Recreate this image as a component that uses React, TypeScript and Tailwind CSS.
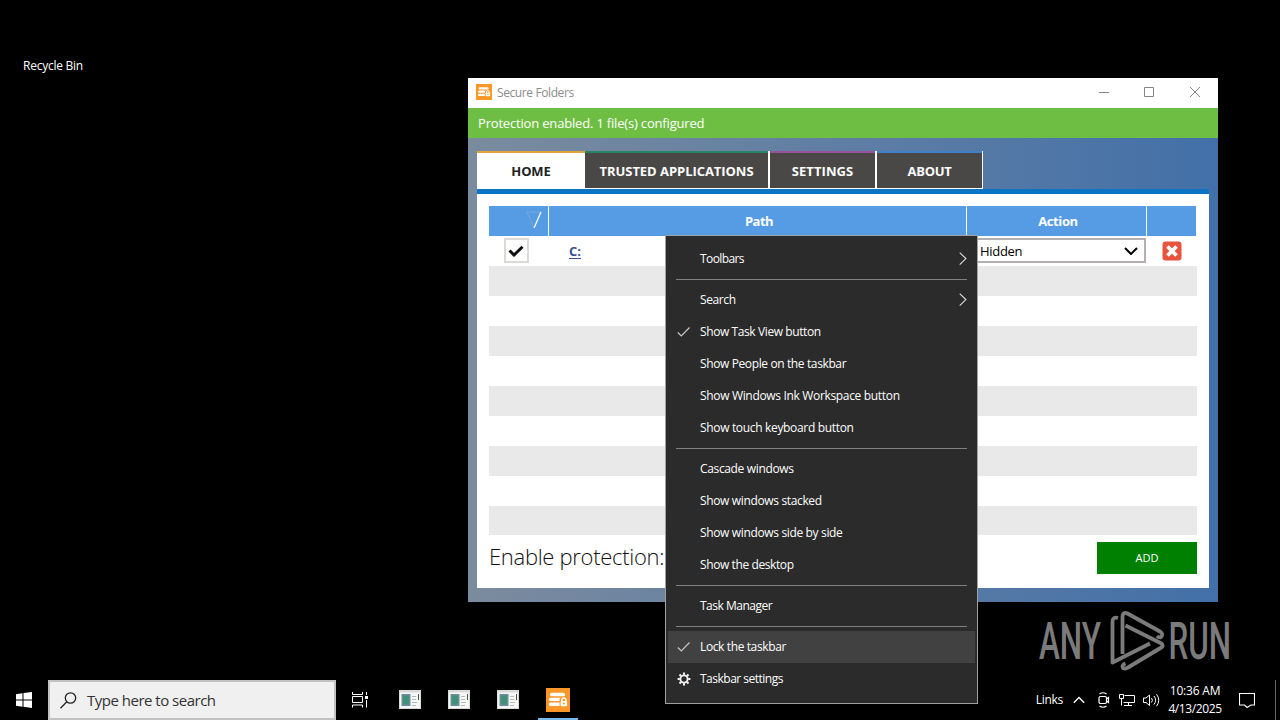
import React, { type FC, type ReactNode } from "react";

type MenuEntry = {
  label: string;
  tracking: string;
  icon?: "check" | "gear";
  submenu?: boolean;
  active?: boolean;
};

const menuGroups: MenuEntry[][] = [
  [{ label: "Toolbars", tracking: "tracking-[-0.6px]", submenu: true }],
  [
    { label: "Search", tracking: "tracking-[-0.4px]", submenu: true },
    { label: "Show Task View button", tracking: "tracking-[-0.4px]", icon: "check" },
    { label: "Show People on the taskbar", tracking: "tracking-[-0.38px]" },
    { label: "Show Windows Ink Workspace button", tracking: "tracking-[-0.33px]" },
    { label: "Show touch keyboard button", tracking: "tracking-[-0.33px]" },
  ],
  [
    { label: "Cascade windows", tracking: "tracking-[-0.35px]" },
    { label: "Show windows stacked", tracking: "tracking-[-0.35px]" },
    { label: "Show windows side by side", tracking: "tracking-[-0.35px]" },
    { label: "Show the desktop", tracking: "tracking-[-0.4px]" },
  ],
  [{ label: "Task Manager", tracking: "tracking-[-0.5px]" }],
  [
    { label: "Lock the taskbar", tracking: "tracking-[-0.38px]", icon: "check", active: true },
    { label: "Taskbar settings", tracking: "tracking-[-0.5px]", icon: "gear" },
  ],
];

const AppLogo: FC<{ className: string }> = ({ className }) => (
  <svg className={className} viewBox="0 0 24 24">
    <rect width="24" height="24" fill="#fb9728" />
    <g fill="#fff">
      <rect x="4" y="4.7" width="15" height="3.6" rx="1.5" />
      <rect x="3" y="9.7" width="16" height="3.4" rx="1.5" />
      <rect x="3" y="14.5" width="14" height="3.6" rx="1.5" />
    </g>
    <rect x="13.6" y="9.2" width="8" height="10" rx="2" fill="#fb9728" />
    <path d="M15.8 13.500v-1.500a2 2 0 0 1 4 0v1.500" fill="none" stroke="#fff" strokeWidth="1.500" />
    <rect x="14.600" y="13" width="6.500" height="5.300" rx="1" fill="#fff" />
    <circle cx="17.800" cy="15.600" r="1" fill="#fb9728" />
  </svg>
);

const CheckIcon = () => (
  <svg className="w-3.5 h-3" viewBox="0 0 14 12">
    <path d="M.8 6.500 4.300 10l8.200-8.500" fill="none" stroke="#c8c8c8" strokeWidth="1.200" />
  </svg>
);

const GearIcon = () => (
  <svg className="w-3.5 h-3.5" viewBox="0 0 14 14">
    <circle cx="7" cy="7" r="3.6" fill="none" stroke="#f2f2f2" strokeWidth="1.9" />
    <g stroke="#f2f2f2" strokeWidth="2.1">
      <path d="M7 .6v2.2M7 11.2v2.2M.6 7h2.2M11.2 7h2.2M2.5 2.5 4 4M10 10l1.5 1.5M2.5 11.5 4 10M10 4l1.5-1.5" />
    </g>
  </svg>
);

const MenuRow: FC<{ entry: MenuEntry }> = ({ entry }) => (
  <div className={`flex h-8 items-center pr-2 ${entry.active ? "bg-[#414141]" : ""}`}>
    <div className="flex w-8 pl-[9px]">
      {entry.icon === "check" && <CheckIcon />}
      {entry.icon === "gear" && <GearIcon />}
    </div>
    <span className={`flex-1 text-[12px] leading-4 font-medium ${entry.tracking}`}>{entry.label}</span>
    {entry.submenu && (
      <svg className="w-2 h-3.5" viewBox="0 0 8 14">
        <path d="m.7 .6 6.200 6-6.200 6" fill="none" stroke="#e0e0e0" strokeWidth="1.100" />
      </svg>
    )}
  </div>
);

const TaskbarMenu = () => (
  <div className="absolute left-[665px] top-[235px] h-[469px] w-[313px] border border-[#a0a0a0] bg-[#2b2b2b] px-0.5 pt-[7px] text-white">
    {menuGroups.map((group, i) => (
      <div key={i}>
        {i > 0 && (
          <div className="h-[9px] px-2 pt-1">
            <div className="h-px bg-[#808080]" />
          </div>
        )}
        {group.map((entry) => (
          <MenuRow key={entry.label} entry={entry} />
        ))}
      </div>
    ))}
  </div>
);

const Tab: FC<{ className: string; children: ReactNode }> = ({ className, children }) => (
  <div className={`flex h-[37px] items-center justify-center border-t-2 pt-0.5 text-[13px] font-bold ${className}`}>
    {children}
  </div>
);

const FolderTable = () => (
  <div className="w-[708px]">
    <div className="flex h-[30px] w-[707px] bg-[#559ce4] text-[13px] font-bold text-white">
      <div className="flex w-[60px] justify-end border-r border-white pt-[5px] pr-[6px]">
        <svg className="w-4 h-[18px]" viewBox="0 0 16 18">
          <path d="M15 1H1l7 16" fill="none" stroke="#7fa5d0" />
          <path d="m15 1-7 16" stroke="#fff" strokeWidth="1.200" />
        </svg>
      </div>
      <div className="flex w-[418px] items-center justify-center border-r border-white pt-0.5 pl-[3px]">
        <span className="tracking-[-0.5px]">Path</span>
      </div>
      <div className="flex w-[180px] items-center justify-center border-r border-white pt-0.5 pl-[3px]">
        <span className="tracking-[-0.4px]">Action</span>
      </div>
    </div>
    <div className="flex h-[30px] items-center">
      <div className="mb-px ml-[15px] flex h-[25px] w-[25px] items-center justify-center border-2 border-[#dcdad6]">
        <svg className="mr-px h-3 w-4" viewBox="0 0 16 12">
          <path d="M1.5 5.5 6 10l8.5-8.3" fill="none" stroke="#111" strokeWidth="3" />
        </svg>
      </div>
      <span className="mt-px ml-[40px] text-[13px] font-bold text-[#3c4f94] underline underline-offset-2">C:</span>
      <div className="mb-px ml-auto flex h-[25px] w-[181px] items-center justify-between border-2 border-[#b4b0b0] pr-1.5 pl-[13px]">
        <span className="pt-0.5 text-[13px] tracking-[-0.300px] text-black">Hidden</span>
        <svg className="w-3.5 h-2" viewBox="0 0 14 8">
          <path d="m1 1 6 6 6-6" fill="none" stroke="#000" strokeWidth="2" />
        </svg>
      </div>
      <svg className="mr-[15px] ml-4 h-5 w-5" viewBox="0 0 20 20">
        <rect x=".5" y=".5" width="19" height="19" rx="3" fill="#e8533d" />
        <path d="m5.5 5.5 9 9m0-9-9 9" stroke="#fff" strokeWidth="3.8" />
      </svg>
    </div>
    {[0, 1, 2, 3, 4, 5, 6, 7].map((n) => (
      <div key={n} className={`h-[30px] ${n % 2 === 0 ? "bg-[#e9e9e9]" : "bg-white"}`} />
    ))}
    <div className="h-[29px] bg-[#e9e9e9]" />
  </div>
);

const SecureFolders = () => (
  <div className="absolute left-[468px] top-[78px] flex h-[524px] w-[750px] flex-col">
    <div className="flex h-[30px] items-center bg-white pr-[17px] pb-0.5 pl-2 text-[#8b8b8b]">
      <AppLogo className="w-4 h-4" />
      <span className="mt-0.5 ml-[5px] text-[12px] tracking-[-0.4px]">Secure Folders</span>
      <svg className="ml-auto w-[102px] h-3" viewBox="0 0 102 12" fill="none" stroke="#858585">
        <path d="M0 6.5h10M45.5 1.5h9v9h-9zM91 1l10 10m0-10L91 11" />
      </svg>
    </div>
    <div className="flex h-[30px] items-center bg-[#6fbe44] pt-0.5 pl-2.5 text-[13px] text-white">
      <span className="tracking-[-0.180px]">Protection enabled. 1 file(s) configured</span>
    </div>
    <div className="flex-1 bg-linear-to-r from-[#7b8b9e] to-[#4270a8] pt-[13px] pr-[9px] pl-[9px]">
      <div className="flex w-[506px] border-b border-white text-white">
        <Tab className="w-[108px] border-[#dfa43c] bg-white text-[#222]">
          <span className="tracking-[-0.1px]">HOME</span>
        </Tab>
        <Tab className="w-[183px] border-[#2b8468] bg-[#4a4747]">
          <span className="tracking-[-0.050px]">TRUSTED APPLICATIONS</span>
        </Tab>
        <div className="w-0.5 bg-white" />
        <Tab className="w-[105px] border-[#95539b] bg-[#4a4747]">
          <span className="tracking-[0.100px]">SETTINGS</span>
        </Tab>
        <div className="w-0.5 bg-white" />
        <Tab className="w-[105px] border-[#3d80cc] bg-[#4a4747]">
          <span className="tracking-[-0.3px]">ABOUT</span>
        </Tab>
        <div className="w-px bg-white" />
      </div>
      <div className="h-[399px] border-t-[5px] border-[#0b75c4] bg-white pt-3 pl-3">
        <FolderTable />
        <div className="flex w-[708px] justify-between pt-[7px]">
          <span className="-mt-px text-[22px] leading-[30px] font-light tracking-[-0.3px] text-[#111]">
            Enable protection:
          </span>
          <div className="flex h-8 w-[100px] items-center justify-center bg-[#008000] text-[11px] text-white">ADD</div>
        </div>
      </div>
    </div>
  </div>
);

const PageIcon = () => (
  <svg className="w-[22px] h-[19px]" viewBox="0 0 22 19">
    <rect width="22" height="19" fill="#d8dada" />
    <rect x="1" y="2.5" width="20" height="15.5" fill="#f6f8f6" />
    <rect x="2.5" y="4" width="9" height="12" fill="#6b8f98" />
    <rect x="4" y="5.500" width="6" height="9" fill="#43907a" />
    <path d="M13 6.500h4M13 9.500h4M13 12.500h5M13 15.500h4" stroke="#b5bab5" />
    <path d="M19.500 4v6" stroke="#4b544b" />
  </svg>
);

const Watermark = () => (
  <svg className="absolute left-[1036px] top-[600px] h-[80px] w-[208px]" viewBox="0 -8 208 80">
    <g fill="#7b7b7b" fontFamily="Roboto, sans-serif" fontSize="51" fontWeight="500">
      <text x="3" y="51" textLength="62" lengthAdjust="spacingAndGlyphs">ANY</text>
      <text x="132.500" y="51" textLength="62.500" lengthAdjust="spacingAndGlyphs">RUN</text>
    </g>
    <g fill="none" stroke="#7b7b7b" strokeWidth="3.800" strokeLinejoin="round">
      <path d="M82 10q-5.500-1.500-5.500 4v40.500L114 35.500" />
      <path d="M86.500 46V9q0-5.500 5-3.500L124 23.500q4 3 1 5.500-2 1-4-1" />
      <path d="m89.500 17.500 35 17.500q4.500 2.500 0 5L92 59.500q-5 2.500-5.500-1 0-2 3-3" />
    </g>
  </svg>
);

const Taskbar = () => (
  <div className="flex h-10 bg-black text-white">
    <div className="flex w-12 items-center justify-center">
      <svg className="w-4 h-4" viewBox="0 0 16 16" fill="#fff">
        <path d="M0 2.200 6.500 1.300v6.200H0zM7.500 1.100 16 0v7.500H7.500zM0 8.500h6.500v6.200L0 13.800zM7.500 8.500H16V16l-8.500-1.200z" />
      </svg>
    </div>
    <div className="flex w-72 items-center border-2 border-[#c1c1c1] bg-[#f0f0f0] pl-2.5 text-[#333]">
      <svg className="w-[17px] h-[17px]" viewBox="0 0 17 17" fill="none" stroke="#222" strokeWidth="1.300">
        <circle cx="10.500" cy="6" r="5.200" />
        <path d="m6.800 9.700-6.300 6.500" />
      </svg>
      <span className="ml-2.5 text-[15px] tracking-[-0.500px]">Type here to search</span>
    </div>
    <div className="flex w-12 items-center justify-center">
      <svg className="w-4 h-4" viewBox="0 0 16 16" fill="none" stroke="#fff">
        <path d="M.5 0v2.500h10V0M.5 4.500h10v6H.5zM.5 15.500v-2.500h10v2.500M14.500 0v3M14.500 8v7.500" />
        <rect x="13" y="4" width="3" height="3" fill="#fff" stroke="none" />
      </svg>
    </div>
    <div className="flex w-[150px] items-center justify-between pr-[15px] pb-0.5 pl-[15px]">
      <PageIcon />
      <PageIcon />
      <PageIcon />
    </div>
    <div className="ml-1 flex w-10 flex-col items-center border-b-2 border-[#76b9ed] pt-2">
      <AppLogo className="w-6 h-6" />
    </div>
    <div className="ml-auto flex items-center">
      <span className="text-[12px] tracking-[-0.300px]">Links</span>
      <svg className="ml-2.5 w-3 h-2" viewBox="0 0 12 8" fill="none" stroke="#fff" strokeWidth="1.300">
        <path d="m.8 6.800 5.200-5.300 5.200 5.300" />
      </svg>
      <svg className="ml-3 h-4 w-3.5" viewBox="0 0 14 16" fill="none" stroke="#fff" strokeWidth="1.200">
        <rect x="2" y="4.500" width="7.500" height="7" rx="1.500" />
        <path d="m9.500 7 2-1.500v5l-2-1.500M2.500 2q3.500-2.500 7 0M2.500 14q3.500 2.500 7 0" />
      </svg>
      <svg className="ml-2 h-3.5 w-4" viewBox="0 0 16 14" fill="none" stroke="#fff">
        <path d="M5.500 2.500h10v7h-11M.5 1.500h4v4h-4zM2.500 5.500v7M9.500 9.500v3M5 12.500h8" />
      </svg>
      <svg className="ml-2 h-3.5 w-[17px]" viewBox="0 0 17 14" fill="none" stroke="#fff">
        <path d="M.5 5v4.500H3l3.500 3V2L3 5zM8.500 5q1.800 2.200 0 4.500M11 3q3.200 4.200 0 8.500M13.500 1.200q4.500 6 0 12" />
      </svg>
      <div className="ml-[7px] flex w-14 flex-col items-center text-[12px] leading-[18px] tracking-[-0.400px] whitespace-nowrap">
        <span className="tracking-[-0.200px]">10:36 AM</span>
        <span>4/13/2025</span>
      </div>
      <svg className="ml-4 h-[17px] w-4" viewBox="0 0 16 17" fill="none" stroke="#fff" strokeWidth="1.100">
        <path d="M.5 1.500h15v11.500h-3.500L8 15.500 5.500 13h-5z" />
      </svg>
      <div className="mr-1 ml-5 h-10 w-px bg-[#666]" />
    </div>
  </div>
);

const App = () => (
  <div className="relative flex h-[720px] w-[1280px] flex-col overflow-hidden bg-black font-['Open_Sans','Noto_Sans',sans-serif]">
    <main className="flex-1 pt-[57px] pl-[23px]">
      <p className="text-[12px] leading-[18px] tracking-[-0.250px] text-white">Recycle Bin</p>
    </main>
    <SecureFolders />
    <Watermark />
    <Taskbar />
    <TaskbarMenu />
  </div>
);

export default App;
